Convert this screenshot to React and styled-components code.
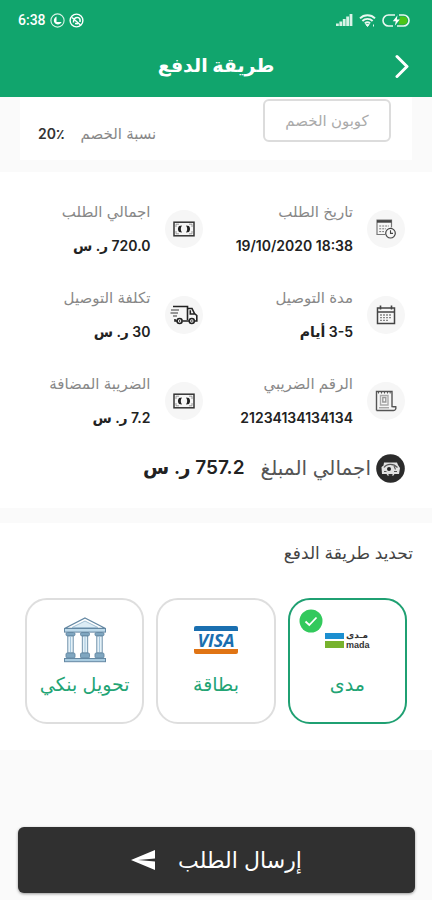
import React, { useState } from "react";
import styled, { createGlobalStyle } from "styled-components";

const methods = [
  { id: "mada", name: "مدى", Logo: MadaLogo },
  { id: "card", name: "بطاقة", Logo: VisaLogo },
  { id: "bank", name: "تحويل بنكي", Logo: BankLogo },
];

const details = [
  { label: "تاريخ الطلب", value: "19/10/2020 18:38", Icon: CalendarClockIcon, ltr: true },
  { label: "اجمالي الطلب", value: "720.0 ر. س", Icon: CashIcon },
  { label: "مدة التوصيل", value: "3-5 أيام", Icon: CalendarIcon },
  { label: "تكلفة التوصيل", value: "30 ر. س", Icon: TruckIcon },
  { label: "الرقم الضريبي", value: "21234134134134", Icon: ReceiptIcon },
  { label: "الضريبة المضافة", value: "7.2 ر. س", Icon: CashIcon },
];

function App() {
  const [method, setMethod] = useState("mada");
  const [coupon, setCoupon] = useState("");

  return (
    <Page dir="rtl">
      <GlobalStyle />
      <Header>
        <StatusBar dir="ltr">
          <StatusGroup>
            <Clock>6:38</Clock>
            <MoonIcon />
            <MuteIcon />
          </StatusGroup>
          <StatusGroup $wide>
            <SignalIcon />
            <WifiIcon />
            <BatteryIcon />
          </StatusGroup>
        </StatusBar>
        <TitleBar>
          <BackButton type="button" aria-label="رجوع">
            <svg width="16" height="24" viewBox="0 0 16 24" fill="none" stroke="#fff" strokeWidth="3">
              <path d="M3 2.5 L13 12.5 L3 22.5" strokeLinejoin="round" strokeLinecap="round" />
            </svg>
          </BackButton>
          <Title>طريقة الدفع</Title>
        </TitleBar>
      </Header>

      <CouponCard>
        <CouponInput
          aria-label="كوبون الخصم"
          placeholder="كوبون الخصم"
          value={coupon}
          onChange={(e) => setCoupon(e.target.value)}
        />
        <Discount>
          <DiscountLabel>نسبة الخصم</DiscountLabel>
          <DiscountValue>20٪</DiscountValue>
        </Discount>
      </CouponCard>

      <Section>
        <Details>
          {details.map(({ label, value, Icon, ltr }) => (
            <Detail key={label}>
              <IconCircle>
                <Icon />
              </IconCircle>
              <DetailText>
                <DetailLabel>{label}</DetailLabel>
                <DetailValue>{ltr ? <bdi dir="ltr">{value}</bdi> : value}</DetailValue>
              </DetailText>
            </Detail>
          ))}
        </Details>
        <Total>
          <TotalIcon />
          <TotalLabel>اجمالي المبلغ</TotalLabel>
          <TotalValue>757.2 ر. س</TotalValue>
        </Total>
      </Section>

      <Section>
        <SectionTitle>تحديد طريقة الدفع</SectionTitle>
        <Methods>
          {methods.map(({ id, name, Logo }) => (
            <Method key={id} $active={method === id}>
              <Radio
                type="radio"
                name="method"
                value={id}
                checked={method === id}
                onChange={() => setMethod(id)}
              />
              {method === id && (
                <Check>
                  <svg width="24" height="24" viewBox="0 0 24 24" fill="none">
                    <circle cx="12" cy="12" r="11.5" fill="#32c95c" />
                    <path d="M6.5 12.5 L10.3 16 L17.5 8.5" stroke="#fff" strokeWidth="1.8" />
                  </svg>
                </Check>
              )}
              <LogoBox>
                <Logo />
              </LogoBox>
              <MethodName>{name}</MethodName>
            </Method>
          ))}
        </Methods>
      </Section>

      <Footer>
        <SubmitButton type="button">
          إرسال الطلب
          <svg width="24" height="20" viewBox="0 0 24 20" fill="#fff">
            <path d="M24 0 V8.4 L7 10 L24 11.6 V20 L0 10 Z" />
          </svg>
        </SubmitButton>
      </Footer>
    </Page>
  );
}

export default App;

function MoonIcon() {
  return (
    <svg width="15" height="15" viewBox="0 0 15 15" fill="none">
      <circle cx="7.5" cy="7.5" r="6.6" stroke="#d9f3e7" strokeWidth="1.1" />
      <path d="M6.5 3.4 V9 H11.6 C10.4 11.8 6.4 12.2 4.6 9.8 C3.2 7.6 4 4.6 6.5 3.4 Z" fill="#fff" />
    </svg>
  );
}

function MuteIcon() {
  return (
    <svg width="15" height="15" viewBox="0 0 15 15" fill="none" stroke="#fff">
      <circle cx="7.5" cy="7.5" r="6.4" strokeWidth="1.4" />
      <path d="M3 4.5 L11.5 12 M4.5 9.5 C4 6 6.5 3.8 9.5 4.6 C11 5.2 11.3 7 11 9 M6 10.5 L9 10.8" strokeWidth="1.5" />
    </svg>
  );
}

function SignalIcon() {
  return (
    <svg width="17" height="12" viewBox="0 0 17 12" fill="#d9f3e7">
      <path d="M0 9.5h2.8V12H0z M3.4 7.5h2.8V12H3.4z M6.8 5h2.8v7H6.8z M10.2 2.5H13V12h-2.8z M13.6 0h2.8v12h-2.8z" />
    </svg>
  );
}

function WifiIcon() {
  return (
    <svg width="17" height="13" viewBox="0 0 17 13" fill="none" stroke="#e8f8f0" strokeWidth="1.9">
      <path d="M1 4.4 C5 0.2 12 0.2 16 4.4 M3.4 7 C6.2 4.2 10.8 4.2 13.6 7 M5.8 9.4 C7.4 8 9.6 8 11.2 9.4" />
      <path d="M6.8 10.5 L8.5 12.6 L10.2 10.5 Z M14.5 10.5 v2" strokeWidth="1" fill="#e8f8f0" />
    </svg>
  );
}

function BatteryIcon() {
  return (
    <svg width="28" height="13" viewBox="0 0 28 13" fill="none">
      <path d="M13 1 H6.5 A5.5 5.5 0 0 0 6.5 12 H11" stroke="#e8f8f0" strokeWidth="1.6" />
      <path d="M17 1 H21.5 A5.5 5.5 0 0 1 21.5 12 H15" stroke="#e8f8f0" strokeWidth="1.6" />
      <path d="M18 2.6 H21.5 A3.9 3.9 0 0 1 21.5 10.4 H16.5 Z" fill="#4cc417" />
      <path d="M15.5 1.2 L10.8 7.2 H13.8 L12.8 11.8 L17.8 5.6 H14.8 Z" fill="#fff" />
    </svg>
  );
}

function CashIcon() {
  return (
    <svg width="22" height="16" viewBox="0 0 22 16" fill="none">
      <rect x="1" y="1.2" width="20" height="13.6" stroke="#333" strokeWidth="1.5" />
      <path d="M3 6 V3.2 H6 M16 3.2 H19 V6 M19 10 V12.8 H16 M6 12.8 H3 V10" stroke="#888" strokeWidth="0.8" />
      <path d="M9 4.6 C7.4 6.6 7.4 9.4 9 11.4 L6 11 C4.6 9.2 4.6 6.8 6 5 Z" fill="#222" />
      <path d="M13 4.6 C14.6 6.6 14.6 9.4 13 11.4 L16 11 C17.4 9.2 17.4 6.8 16 5 Z" fill="#222" />
    </svg>
  );
}

function TruckIcon() {
  return (
    <svg width="28" height="20" viewBox="0 0 28 20" fill="none" stroke="#222" strokeWidth="1.6">
      <path d="M3 1.5 H17.5 V15 M17.5 3.5 H22 L24.5 8.5 L26.8 10.5 V16 H24.6 M20.3 5.2 V9 H24.5 M19 16 H12.5 M7 16 H5 V14" />
      <path d="M1 5 H9 M0.5 8 H8 M3 11 H7" stroke="#777" />
      <circle cx="9.6" cy="16" r="2.5" />
      <circle cx="21.8" cy="16" r="2.5" />
      <path d="M9 16 h1.2 M21.2 16 h1.2" />
    </svg>
  );
}

function CalendarIcon() {
  return (
    <svg width="20" height="20" viewBox="0 0 20 20" fill="none" stroke="#444" strokeWidth="1.5">
      <path d="M1.5 3 H18.5 V18.5 H1.5 Z M1.5 7 H18.5" />
      <path d="M4.5 0.5 V4.5 M15.5 0.5 V4.5" strokeWidth="1.6" />
      <path d="M4 10 H16 M4 12.7 H16 M4 15.4 H13" stroke="#888" strokeWidth="1.3" strokeDasharray="2 1" />
    </svg>
  );
}

function CalendarClockIcon() {
  return (
    <svg width="20" height="20" viewBox="0 0 20 20" fill="none" stroke="#777">
      <path d="M9 15.5 H1 V1 H15.5 V8.5" strokeWidth="1.2" />
      <path d="M1 2.4 H15.5" stroke="#444" strokeWidth="2.6" />
      <path d="M3.2 7 H13 M3.2 9.8 H10 M3.2 12.6 H8" strokeDasharray="2 1" />
      <circle cx="14.5" cy="14.2" r="4.8" fill="#f7f7f7" stroke="#444" strokeWidth="1.2" />
      <path d="M14.5 11.2 V14.4 H17" stroke="#444" strokeWidth="1.1" />
    </svg>
  );
}

function ReceiptIcon() {
  return (
    <svg width="22" height="22" viewBox="0 0 22 22" fill="none" stroke="#555" strokeWidth="1.4">
      <path d="M1.5 20.5 V1.5 H17 V17.3 M1.5 20.5 H18.5 C20.5 20.5 21.2 18.5 20.8 16.8 H17.5" />
      <path d="M3.5 1 V3.5 M6.5 1 V3.5 M9.5 1 V3.5 M12.5 1 V3.5 M15.2 1 V3.5" strokeWidth="1" />
      <path d="M5.5 5.5 H13 V15 H5.5 Z" stroke="#aaa" />
      <path d="M7.8 7.5 H10.8 V12 H7.8 Z" stroke="#999" />
      <path d="M4 17.8 H14" stroke="#888" strokeWidth="1" />
    </svg>
  );
}

function TotalIcon() {
  return (
    <svg width="29" height="29" viewBox="0 0 29 29" fill="none">
      <circle cx="14.5" cy="14.5" r="14.3" fill="#2b2b2b" />
      <path d="M8 8.5 H21 L22 11 L24 14 L23 20 H18.5 L17 22 H12 L10.5 20 H6 L5.5 13 L7.5 11.5 Z" fill="#e2e2e2" />
      <path d="M8 13.5 C10.5 9.5 17.5 9 21.5 13.5" stroke="#555" strokeWidth="1.2" />
      <circle cx="13" cy="15" r="2" fill="#222" />
      <path d="M18 12 L19.5 15.5 M8 17.5 H10.5 M18 17.5 H21" stroke="#555" strokeWidth="1.1" />
      <path d="M12.5 20 H16.5 V22 H12.5 Z" fill="#333" />
    </svg>
  );
}

function MadaLogo() {
  return (
    <MadaMark>
      <svg width="19" height="16" viewBox="0 0 19 16">
        <rect width="19" height="6" y="1" fill="#1c8fd0" />
        <rect width="19" height="7" y="9" fill="#77b22d" />
      </svg>
      <MadaText>
        <span>مـدى</span>
        <span>mada</span>
      </MadaText>
    </MadaMark>
  );
}

function VisaLogo() {
  return (
    <VisaMark>
      <VisaText>VISA</VisaText>
    </VisaMark>
  );
}

function BankLogo() {
  return (
    <svg width="44" height="46" viewBox="0 0 44 46" fill="#bcd9ea" stroke="#6488a3">
      <path d="M22 1 L42.5 11.5 H1.5 Z" fill="#fff" strokeWidth="1.4" />
      <path d="M22 4 L35 10.5 H9 Z" fill="#dcecf5" stroke="#8fb3ca" strokeWidth="0.8" />
      <rect x="1.5" y="11.5" width="41" height="3.6" strokeWidth="1" />
      {[3, 17.5, 32].map((x) => (
        <g key={x} strokeWidth="0.9">
          <rect x={x} y="15.5" width="9" height="3.4" rx="1.4" fill="#7fa6c0" />
          <rect x={x + 1.8} y="19" width="5.4" height="17" fill="#e4f1f8" />
          <path d={`M${x + 4.5} 19 V36`} stroke="#9dc1d8" />
          <rect x={x} y="36" width="9" height="5" rx="1.2" fill="#7fa6c0" />
        </g>
      ))}
      <rect x="1.5" y="41.5" width="41" height="3.2" strokeWidth="1" fill="#a8cbe0" />
    </svg>
  );
}

const GlobalStyle = createGlobalStyle`
  * {
    box-sizing: border-box;
  }
  body {
    margin: 0;
    background: #fafafa;
  }
  body, input, button {
    font-family: Inter, "DejaVu Sans", sans-serif;
  }
`;

const Page = styled.div`
  display: flex;
  flex-direction: column;
  min-height: 100vh;
  background: #fafafa;
  color: #222;
`;

const Header = styled.header`
  position: sticky;
  top: 0;
  z-index: 1;
  background: #11a56d;
  color: white;
  padding-bottom: 5px;
`;

const StatusBar = styled.div`
  display: flex;
  justify-content: space-between;
  align-items: center;
  height: 40px;
  padding: 0 22px 0 18px;
`;

const StatusGroup = styled.div`
  display: flex;
  align-items: center;
  gap: ${(props) => (props.$wide ? 6 : 4)}px;
`;

const Clock = styled.span`
  font-family: Roboto, sans-serif;
  font-size: 14px;
  font-weight: 500;
`;

const TitleBar = styled.div`
  display: grid;
  grid-template-columns: 40px 1fr 40px;
  align-items: center;
  height: 52px;
  padding: 0 16px;
`;

const BackButton = styled.button`
  display: flex;
  padding: 6px;
  border: 0;
  background: none;
  cursor: pointer;
`;

const Title = styled.h1`
  margin: 0;
  font-size: 19px;
  line-height: 30px;
  font-weight: 700;
  text-align: center;
  white-space: nowrap;
`;

const CouponCard = styled.section`
  display: flex;
  justify-content: space-between;
  align-items: flex-end;
  margin: 0 20px 12px;
  padding: 2px 21px 18px 18px;
  background: white;
`;

const CouponInput = styled.input`
  width: 128px;
  height: 43px;
  border: 2px solid #dcdcdc;
  border-radius: 6px;
  background: white;
  font-size: 15px;
  text-align: center;
  &::placeholder {
    color: #aaa;
    opacity: 1;
  }
`;

const Discount = styled.div`
  display: flex;
  align-items: center;
  gap: 16px;
  line-height: 16px;
`;

const DiscountLabel = styled.span`
  font-size: 15px;
  color: #888;
`;

const DiscountValue = styled.span`
  font-size: 14px;
  font-weight: 600;
  color: #333;
`;

const Section = styled.section`
  background: white;
  & + & {
    margin-top: 15px;
  }
`;

const Details = styled.div`
  display: grid;
  grid-template-columns: 1fr 1fr;
  row-gap: 18px;
  padding: 23px 27px 0 0;
`;

const Detail = styled.div`
  display: flex;
  align-items: center;
  gap: 14px;
`;

const IconCircle = styled.div`
  display: flex;
  align-items: center;
  justify-content: center;
  flex: none;
  width: 38px;
  height: 38px;
  border-radius: 50%;
  background: #f6f6f6;
`;

const DetailText = styled.div`
  line-height: 34px;
  white-space: nowrap;
`;

const DetailLabel = styled.div`
  font-size: 15px;
  color: #888;
`;

const DetailValue = styled.div`
  font-size: 14px;
  font-weight: 600;
`;

const Total = styled.div`
  display: flex;
  align-items: center;
  padding: 15px 27px 22px;
  line-height: 36px;
  white-space: nowrap;
`;

const TotalLabel = styled.span`
  margin: 0 5px 0 16px;
  font-size: 20px;
  color: #555;
`;

const TotalValue = styled.span`
  font-size: 19px;
  font-weight: 600;
`;

const SectionTitle = styled.h2`
  margin: 0;
  padding: 15px 19px;
  font-size: 17px;
  line-height: 30px;
  font-weight: 400;
  color: #444;
`;

const Methods = styled.div`
  display: flex;
  gap: 12px;
  padding: 15px 25px 26px;
`;

const Method = styled.label`
  position: relative;
  display: flex;
  flex: 1;
  flex-direction: column;
  align-items: center;
  height: 126px;
  padding-top: 16px;
  border: 2px solid ${(props) => (props.$active ? "#1fa072" : "#dedede")};
  border-radius: 22px;
  background: white;
  cursor: pointer;
`;

const Radio = styled.input`
  position: absolute;
  opacity: 0;
  margin: 0;
`;

const Check = styled.span`
  position: absolute;
  top: 9px;
  left: 9px;
  display: flex;
`;

const LogoBox = styled.div`
  display: flex;
  align-items: center;
  justify-content: center;
  height: 48px;
`;

const MethodName = styled.span`
  margin-top: 6px;
  font-size: 19px;
  line-height: 30px;
  color: #22a474;
  white-space: nowrap;
`;

const MadaMark = styled.div`
  display: flex;
  align-items: center;
  gap: 2px;
  direction: ltr;
`;

const MadaText = styled.div`
  display: flex;
  flex-direction: column;
  font-family: "Liberation Sans", "DejaVu Sans", sans-serif;
  font-size: 9px;
  line-height: 10px;
  font-weight: 700;
  color: #333;
`;

const VisaMark = styled.div`
  width: 44px;
  border-top: 5px solid #1a6fb0;
  border-bottom: 5px solid #e07414;
  border-radius: 2px;
  text-align: center;
`;

const VisaText = styled.span`
  display: block;
  font-family: "Open Sans", sans-serif;
  font-size: 18px;
  line-height: 18px;
  font-weight: 700;
  font-style: italic;
  color: #1a6fb0;
`;

const Footer = styled.footer`
  margin-top: auto;
  padding: 18px 17px 7px 18px;
`;

const SubmitButton = styled.button`
  display: flex;
  align-items: center;
  justify-content: center;
  gap: 23px;
  width: 100%;
  height: 66px;
  border: 0;
  border-radius: 6px;
  background: #303030;
  box-shadow: 0 1px 3px rgba(0, 0, 0, 0.4);
  color: white;
  font-size: 22px;
  cursor: pointer;
`;
